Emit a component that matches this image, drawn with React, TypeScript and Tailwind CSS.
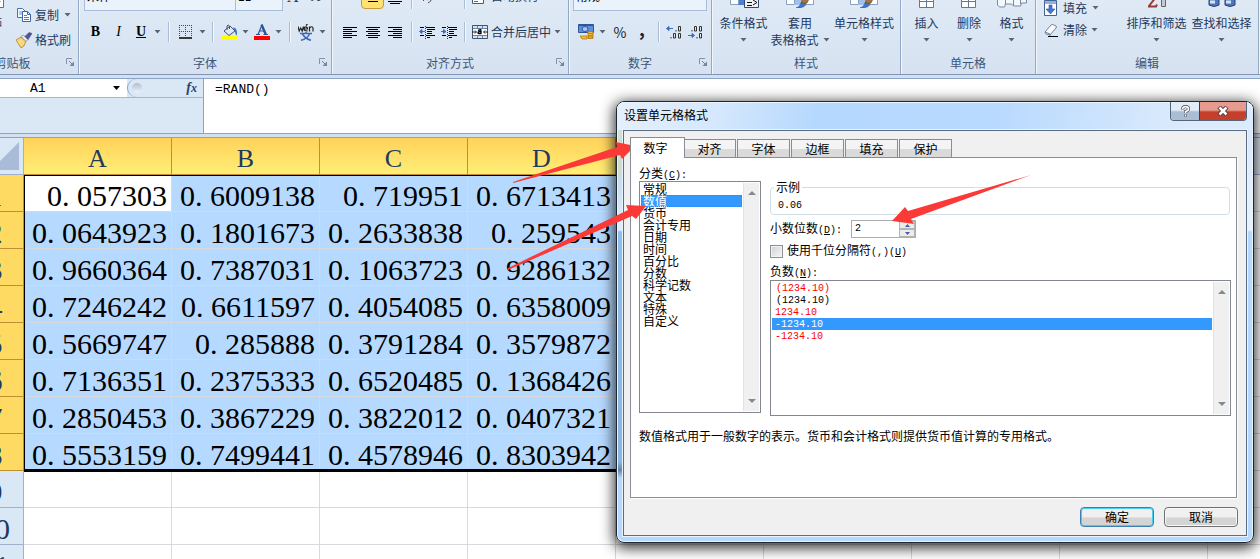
import { useState, type ReactNode } from "react";
import clsx from "clsx";

const columns = ["A", "B", "C", "D", "E", "F", "G", "H", "I"];

const values = [
  ["0.057303", "0.6009138", "0.719951", "0.6713413"],
  ["0.0643923", "0.1801673", "0.2633838", "0.259543"],
  ["0.9660364", "0.7387031", "0.1063723", "0.9286132"],
  ["0.7246242", "0.6611597", "0.4054085", "0.6358009"],
  ["0.5669747", "0.285888", "0.3791284", "0.3579872"],
  ["0.7136351", "0.2375333", "0.6520485", "0.1368426"],
  ["0.2850453", "0.3867229", "0.3822012", "0.0407321"],
  ["0.5553159", "0.7499441", "0.4578946", "0.8303942"],
  [],
  [],
  [],
];

const tabs = ["数字", "对齐", "字体", "边框", "填充", "保护"];

const categories = [
  "常规", "数值", "货币", "会计专用", "日期", "时间",
  "百分比", "分数", "科学记数", "文本", "特殊", "自定义",
];

const negatives = [
  { text: "(1234.10)", red: true, indent: true },
  { text: "(1234.10)", red: false, indent: true },
  { text: "1234.10", red: true, indent: false },
  { text: "-1234.10", red: false, indent: false },
  { text: "-1234.10", red: true, indent: false },
];

/* ---------- icons ---------- */

function Caret({ dark = false }: { dark?: boolean }) {
  return (
    <svg width="7" height="4" viewBox="0 0 7 4" className="shrink-0" aria-hidden="true">
      <path d={dark ? "M0 0h7L3.500 4z" : "M.5 0h6L3.500 3.500z"} fill={dark ? "#000" : "#5c6673"} />
    </svg>
  );
}

function Launcher() {
  return (
    <svg width="8" height="8" viewBox="0 0 8 8" aria-hidden="true">
      <path d="M.5 6V.5H6" fill="none" stroke="#8494a8" />
      <path d="M3 3l3 3" stroke="#75859b" />
      <path d="M8 3.500V8H3.500z" fill="#75859b" />
    </svg>
  );
}

function CopyIcon() {
  return (
    <svg width="16" height="16" viewBox="0 0 16 16" aria-hidden="true">
      <path d="M1.500 1.500h5l3 3v6h-8z" fill="#f5f9ff" stroke="#4a72b0" />
      <path d="M3 5h4M3 7h4" stroke="#6d94d0" />
      <path d="M6.500 4.500h5l3 3v7h-8z" fill="#fff" stroke="#3b66a8" />
      <path d="M11.500 4.500v3h3" fill="none" stroke="#3b66a8" />
      <path d="M8 8.500h3M8 10.500h5M8 12.500h5" stroke="#4f81c8" />
    </svg>
  );
}

function BrushIcon() {
  return (
    <svg width="16" height="16" viewBox="0 0 16 16" aria-hidden="true">
      <path d="M0 8l5-3 5 4-2 5-3 2z" fill="#f3cf62" stroke="#a67c34" strokeWidth=".7" />
      <path d="M2 8.500l4 5M4 7.500l4 4.500" stroke="#fff2b8" />
      <path d="M5 4.500L7.500 3l4.500 4.500-2 2z" fill="#e8ebf2" stroke="#7b7f8c" strokeWidth=".7" />
      <path d="M9 4.500L13 .5l3 1-4 6z" fill="#54549f" stroke="#33336e" strokeWidth=".5" />
    </svg>
  );
}

function PasteIcon() {
  return (
    <svg width="32" height="32" viewBox="0 0 32 32" aria-hidden="true">
      <path d="M3 3h22v26H3z" fill="#e2b55c" stroke="#97692b" />
      <path d="M12.500 10.500h17v20h-17z" fill="#fff" stroke="#5b6f8f" />
      <path d="M15 24.500h12M15 21.500h12M15 18.500h12" stroke="#9db4d6" />
    </svg>
  );
}

function BordersIcon() {
  return (
    <svg width="14" height="14" viewBox="0 0 14 14" aria-hidden="true">
      <path d="M0 .5h13M0 6.500h13" stroke="#444" strokeDasharray="1 1" />
      <path d="M.5 0v12M6.500 0v12M12.500 0v12" stroke="#444" strokeDasharray="1 1" />
      <path d="M0 13h13" stroke="#000" strokeWidth="1.500" />
    </svg>
  );
}

function BucketIcon() {
  return (
    <svg width="16" height="16" viewBox="0 0 16 16" aria-hidden="true">
      <path d="M2 7l6-5 5 5-6 4.500z" fill="#dde8f7" stroke="#44536b" />
      <path d="M5 6V2q1-2 2.500 0V5" fill="none" stroke="#44536b" />
      <path d="M11 3.500q4.500-.5 4 8-2-1-2-4z" fill="#3f72c4" />
      <path d="M0 12h16v4H0z" fill="#ff0" />
    </svg>
  );
}

function FontColorIcon() {
  return (
    <svg width="16" height="16" viewBox="0 0 16 16" aria-hidden="true">
      <path d="M2 10.500h4M9.500 10.500h4.500M4 10.500L8 1M5.500 7h5" fill="none" stroke="#2d5593" strokeWidth="1.200" />
      <path d="M7.500 .5l4.300 10" fill="none" stroke="#2d5593" strokeWidth="2.400" />
      <path d="M0 12h16v4H0z" fill="red" />
    </svg>
  );
}

function PhoneticIcon() {
  return (
    <svg width="16" height="17" viewBox="0 0 16 17" aria-hidden="true">
      <path d="M0 2.500L1.200 7l1.500-3 1.500 3L5.500 2.500M6 5h3.500q0-2.200-1.700-2.200T6 5q0 2 3.500 1.800M8 1.500L9.500 0M11.500 7.500v-5M11.500 4q3-2.500 3.500 0v3.500" fill="none" stroke="#222" strokeWidth="1.200" />
      <path d="M2 9.500h12M8 8v2M4.500 10q3 5 8.500 6.300M11.500 10Q9 15 3 16.300" fill="none" stroke="#3f68b5" strokeWidth="1.500" />
    </svg>
  );
}

function LinesIcon({ align }: { align: "left" | "center" | "right" }) {
  const paths = {
    left: "M0 .5h14M0 2.500h9M0 4.500h14M0 6.500h9M0 8.500h14M0 10.500h9",
    center: "M0 .5h14M2 2.500h10M0 4.500h14M2 6.500h10M0 8.500h14M2 10.500h10",
    right: "M0 .5h14M5 2.500h9M0 4.500h14M5 6.500h9M0 8.500h14M5 10.500h9",
  };
  return (
    <svg width="14" height="11" viewBox="0 0 14 11" aria-hidden="true">
      <path d={paths[align]} stroke="#000" />
    </svg>
  );
}

function IndentIcon({ increase = false }: { increase?: boolean }) {
  return (
    <svg width="16" height="13" viewBox="0 0 16 13" aria-hidden="true">
      <path d="M1 1.500h4M7 1.500h9M8 3.500h8M8 5.500h5M8 7.500h5M1 9.500h4M7 9.500h9M8 11.500h3" stroke="#000" />
      <path d="M6.500 0v13" stroke="#333" strokeDasharray="1 1" />
      <path d={increase ? "M0 5.500h3M2.500 3.500L5 5.500 2.500 7.500z" : "M2 5.500h4M3 3.500L.5 5.500 3 7.500z"} fill="#3b6cc5" stroke="#3b6cc5" />
    </svg>
  );
}

function MergeIcon() {
  return (
    <svg width="16" height="14" viewBox="0 0 16 14" aria-hidden="true">
      <path d="M.5 .5h15v13H.5z" fill="#d3e2f4" stroke="#44546e" />
      <path d="M5.500 1v3M10.500 1v3M5.500 10v3M10.500 10v3" stroke="#6683a8" />
      <path d="M1 4h14v6H1z" fill="#fff" />
      <path d="M1 3.500h14M1 10.500h14" stroke="#6683a8" />
      <path d="M0 7h4M12 7h4M3 5.500L4.500 7 3 8.500M13 5.500L11.500 7 13 8.500" fill="none" stroke="#222" />
      <path d="M6 5.500q3-1.500 3 0V9M9 6.500q-3 0-3 1.300T9 8.500" fill="none" stroke="#000" strokeWidth="1.300" />
    </svg>
  );
}

function WrapIcon() {
  return (
    <svg width="12" height="16" viewBox="0 0 12 16" aria-hidden="true">
      <path d="M.5 .5h11v15H.5z" fill="#fff" stroke="#44607f" />
      <path d="M2 11.500h7M2 13.500h4" stroke="#3b6cc5" />
    </svg>
  );
}

function CurrencyIcon() {
  return (
    <svg width="17" height="16" viewBox="0 0 17 16" aria-hidden="true">
      <path d="M.5 .5h15v8H.5z" fill="#5f8fdb" stroke="#2f569b" />
      <path d="M1 1h14v1H1z" fill="#2f569b" />
      <ellipse cx="7" cy="5" rx="3" ry="2.500" fill="#a8c5f0" stroke="#2f569b" />
      <path d="M10 7.500h5v7h-5zM2 12h7v3H4z" fill="#f2bd3b" stroke="#a86f0c" strokeWidth=".7" />
      <path d="M10 9.500h5M10 11.500h5M10 13h5" stroke="#a86f0c" strokeWidth=".7" />
    </svg>
  );
}

function DecimalIcon({ more = false }: { more?: boolean }) {
  return (
    <svg width="16" height="13" viewBox="0 0 16 13" aria-hidden="true">
      {more ? (
        <g fill="none" stroke="#333">
          <path d="M4 4v1.500M6.500 .5h2v4.500h-2zM11.500 .5h2v4.500h-2zM11.500 7.500h2v4.500h-2zM9 11v1.500" />
          <path d="M0 9.500h5M4 7.500l2.500 2L4 11.500z" fill="#3b6cc5" stroke="#3b6cc5" />
        </g>
      ) : (
        <g fill="none" stroke="#333">
          <path d="M12.500 .5h2v4.500h-2zM10 4v1.500M7.500 7.500h2v4.500h-2zM12.500 7.500h2v4.500h-2zM5 11v1.500" />
          <path d="M2 2.500h5M3 .5L.5 2.500 3 4.500z" fill="#3b6cc5" stroke="#3b6cc5" />
        </g>
      )}
    </svg>
  );
}

function StyleIcon({ brush = true }: { brush?: boolean }) {
  return (
    <svg width="30" height="28" viewBox="0 0 30 28" aria-hidden="true">
      <path d="M1.500 1.500h27v23h-27z" fill="#fff" stroke="#8aa0bd" />
      <path d="M9 2h7v23H9z" fill={brush ? "#9dc0ee" : "#4a7fd8"} />
      <path d="M2 18.500h26M9.500 2v22M16.500 2v22" stroke="#8aa0bd" />
      {brush ? (
        <>
          <path d="M11 28q4-1 5-5l5-1q1 6-10 6z" fill="#4373ca" stroke="#2c4f94" strokeWidth=".6" />
          <path d="M16 23L21 12l5-6 3 3-7 14z" fill="#a0763c" stroke="#67471d" strokeWidth=".6" />
        </>
      ) : (
        <>
          <path d="M15.500 14.500h14v13h-14z" fill="#eef3fa" stroke="#34496b" />
          <path d="M18 22.500h5M18 25.500h5M24 20l4 2.500-4 2.500" fill="none" stroke="#111" />
        </>
      )}
    </svg>
  );
}

function CellsIcon({ wide = false }: { wide?: boolean }) {
  return wide ? (
    <svg width="30" height="28" viewBox="0 0 30 28" aria-hidden="true">
      <path d="M.5 12v13l2 2h5l1-3h6l2 2h7l1-3h5V12M8.500 12v12M16.500 12v14M23.500 12v12" fill="#f4f8fd" stroke="#7889a2" />
    </svg>
  ) : (
    <svg width="16" height="26" viewBox="0 0 16 26" aria-hidden="true">
      <path d="M.5 .5h14v25H.5z" fill="#fff" stroke="#66778f" />
      <path d="M1 19.500h14M7.500 1v24" stroke="#66778f" />
    </svg>
  );
}

function FillDownIcon() {
  return (
    <svg width="14" height="16" viewBox="0 0 14 16" aria-hidden="true">
      <path d="M.5 .5h12v15H.5z" fill="#fff" stroke="#45638f" />
      <path d="M1 1h11v3H1z" fill="#8fb0e2" />
      <path d="M5 5h3v4h3l-4.500 5L2 9h3z" fill="#3f76dc" stroke="#2953a8" strokeWidth=".6" />
    </svg>
  );
}

function EraserIcon() {
  return (
    <svg width="15" height="13" viewBox="0 0 15 13" aria-hidden="true">
      <path d="M1 8l6-7q1-1 3 0l2 1q1 1 0 2l-6 7-4-1z" fill="#f8fafd" stroke="#73839b" />
      <path d="M1 8l5 2v2" fill="none" stroke="#73839b" />
      <path d="M4 12.500h10" stroke="#000" />
    </svg>
  );
}

function SortIcon() {
  return (
    <svg width="20" height="26" viewBox="0 0 20 26" aria-hidden="true">
      <path d="M9 15L2 24M1 24.500h8l1-2" fill="none" stroke="#9a3a34" strokeWidth="2" />
      <path d="M14.500 10.500h4v14h-4z" fill="#c5c9d0" stroke="#6d6560" />
    </svg>
  );
}

function FindIcon() {
  return (
    <svg width="28" height="24" viewBox="0 0 28 24" aria-hidden="true">
      <path d="M1 12h10v9q-5 3-10 0zM17 12h10v9q-5 3-10 0z" fill="#4f77ba" stroke="#28406f" />
      <path d="M2 18h5M18 18h5" stroke="#d6e4fa" strokeWidth="3" />
    </svg>
  );
}

/* ---------- ribbon ---------- */

function Group({ title, launcher = false, className, children }: {
  title: string;
  launcher?: boolean;
  className: string;
  children: ReactNode;
}) {
  return (
    <section
      aria-label={title}
      className={clsx("flex h-[97px] shrink-0 flex-col border-r border-[#94a8c6] shadow-[1px_0_0_#f2f7fd]", className)}
    >
      <div className="flex h-[75px] flex-col">{children}</div>
      <div className="relative flex h-[22px] items-center justify-center text-[#3e5578]">
        {title}
        {launcher && (
          <button aria-label={title + "设置"} className="absolute top-1.5 right-1">
            <Launcher />
          </button>
        )}
      </div>
    </section>
  );
}

function Tool({ label, className, children }: { label: string; className: string; children: ReactNode }) {
  return (
    <button aria-label={label} className={clsx("flex h-[22px] shrink-0 items-center justify-center", className)}>
      {children}
    </button>
  );
}

function Sep({ className }: { className: string }) {
  return (
    <span className={clsx("flex shrink-0 justify-center", className)}>
      <span className="h-5 w-px bg-[#aabdd6] shadow-[1px_0_0_#f5f9ff]" />
    </span>
  );
}

function BigButton({ icon, lines, className }: { icon: ReactNode; lines: string[]; className: string }) {
  return (
    <button className={clsx("flex h-[75px] shrink-0 flex-col items-center whitespace-nowrap", className)}>
      <span className="flex h-[31px] items-end">{icon}</span>
      <span className="mt-1.5 h-[17px] leading-[17px]">{lines[0]}</span>
      <span className="flex h-[17px] items-center gap-1 leading-[17px]">
        {lines[1]}
        <Caret />
      </span>
    </button>
  );
}

function Ribbon() {
  return (
    <header className="flex h-[75px] items-end overflow-hidden border-b border-[#8296b4] bg-linear-to-b from-[#dfeaf6] to-[#d6e2f1] text-[#1e395b]">
      <Group title="剪贴板" launcher className="-ml-[53px] w-[132px]">
        <div className="flex">
          <button className="flex h-[75px] w-[59px] flex-col items-end">
            <PasteIcon />
            <span className="mt-1 mr-1">粘贴</span>
          </button>
          <div className="mt-[25px] ml-2.5">
            <button className="flex h-[25px] items-center gap-[3px] whitespace-nowrap">
              <CopyIcon />复制<span className="ml-0.5"><Caret /></span>
            </button>
            <button className="flex h-[25px] items-center gap-[3px] whitespace-nowrap">
              <BrushIcon />格式刷
            </button>
          </div>
        </div>
      </Group>

      <Group title="字体" launcher className="w-[253px]">
        <div className="flex items-start pl-[5px]">
          <select aria-label="字体名称" className="h-[34px] w-[152px] appearance-none border border-[#a9bddb] bg-[#eaf2fb] pt-1 pl-0.5 text-black">
            <option>宋体</option>
          </select>
          <select aria-label="字号" className="-ml-px h-[34px] w-[48px] appearance-none border border-[#a9bddb] bg-[#eaf2fb] pt-1 pl-0.5 text-black">
            <option>11</option>
          </select>
          <button className="mt-3 ml-1 font-['Liberation_Serif',serif] text-base leading-4">A</button>
          <button className="mt-3 ml-3 font-['Liberation_Serif',serif] text-sm leading-4">A</button>
        </div>
        <div className="mt-2.5 flex items-center pl-[5px]">
          <Tool label="加粗" className="w-[23px] font-['Liberation_Serif',serif] text-sm font-bold text-black"><b>B</b></Tool>
          <Tool label="倾斜" className="w-[23px] font-['Liberation_Serif',serif] text-sm text-black"><i>I</i></Tool>
          <Tool label="下划线" className="w-[22px] font-['Liberation_Serif',serif] text-sm font-bold text-black"><u>U</u></Tool>
          <Tool label="下划线选项" className="w-2.5"><Caret /></Tool>
          <Sep className="w-3" />
          <Tool label="边框" className="w-6"><BordersIcon /></Tool>
          <Tool label="边框选项" className="w-2"><Caret /></Tool>
          <Sep className="w-[13px]" />
          <Tool label="填充颜色" className="w-[21px]"><BucketIcon /></Tool>
          <Tool label="填充颜色选项" className="w-2.5"><Caret /></Tool>
          <Tool label="字体颜色" className="w-[23px]"><FontColorIcon /></Tool>
          <Tool label="字体颜色选项" className="w-2.5"><Caret /></Tool>
          <Sep className="w-3" />
          <Tool label="拼音" className="w-[21px]"><PhoneticIcon /></Tool>
          <Tool label="拼音选项" className="w-3"><Caret /></Tool>
        </div>
      </Group>

      <Group title="对齐方式" launcher className="w-[237px]">
        <div className="flex h-8 items-end pl-1.5">
          <Tool label="顶端对齐" className="w-[23px] pb-3"><LinesIcon align="left" /></Tool>
          <button aria-label="垂直居中" className="flex h-[22px] w-[23px] items-center justify-center rounded-sm border border-[#c79a35] bg-[#ffe273] pb-[3px]">
            <LinesIcon align="center" />
          </button>
          <Tool label="底端对齐" className="w-[22px]"><LinesIcon align="center" /></Tool>
          <Sep className="w-2.5" />
          <Tool label="方向" className="w-[22px]">
            <svg width="12" height="12" viewBox="0 0 12 12" aria-hidden="true">
              <path d="M2 9l8-8M3 5l3 3M6 8q3-3 4-1t-3 4" fill="none" stroke="#555" />
            </svg>
          </Tool>
          <span className="w-[22px]" />
          <Sep className="w-[9px]" />
          <button className="ml-[3px] flex h-[27px] items-center gap-[7px] leading-4 whitespace-nowrap"><WrapIcon />自动换行</button>
        </div>
        <div className="mt-3 flex items-center pl-1.5">
          <Tool label="左对齐" className="w-[23px]"><LinesIcon align="left" /></Tool>
          <Tool label="居中" className="w-[23px]"><LinesIcon align="center" /></Tool>
          <Tool label="右对齐" className="w-[22px]"><LinesIcon align="right" /></Tool>
          <Sep className="w-2.5" />
          <Tool label="减少缩进量" className="w-[22px]"><IndentIcon /></Tool>
          <Tool label="增加缩进量" className="w-[22px]"><IndentIcon increase /></Tool>
          <Sep className="w-[9px]" />
          <button className="ml-[3px] flex items-center gap-[3px] whitespace-nowrap">
            <MergeIcon />合并后居中<Caret />
          </button>
        </div>
      </Group>

      <Group title="数字" launcher className="w-[143px]">
        <select aria-label="数字格式" className="mx-1 h-[34px] appearance-none border border-[#a9bddb] bg-[#eaf2fb] pt-1 pl-0.5 text-black">
          <option>常规</option>
        </select>
        <div className="mt-2.5 flex items-center pl-2">
          <Tool label="会计数字格式" className="w-[18px]"><CurrencyIcon /></Tool>
          <Tool label="会计数字格式选项" className="w-3.5"><Caret /></Tool>
          <Tool label="百分比样式" className="w-[22px] text-sm text-[#222]">%</Tool>
          <Tool label="千位分隔样式" className="w-[22px] pb-2 text-lg font-bold text-[#222]">,</Tool>
          <Sep className="w-2.5" />
          <Tool label="增加小数位数" className="w-[22px]"><DecimalIcon /></Tool>
          <Tool label="减少小数位数" className="w-[22px]"><DecimalIcon more /></Tool>
        </div>
      </Group>

      <Group title="样式" className="w-[189px]">
        <div className="flex pl-1">
          <BigButton icon={<StyleIcon brush={false} />} lines={["条件格式"]} className="w-[55px]" />
          <BigButton icon={<StyleIcon />} lines={["套用", "表格格式"]} className="w-[58px]" />
          <BigButton icon={<StyleIcon />} lines={["单元格样式"]} className="w-[70px]" />
        </div>
      </Group>

      <Group title="单元格" className="w-[135px]">
        <div className="flex pl-1">
          <BigButton icon={<CellsIcon />} lines={["插入"]} className="w-[43px]" />
          <BigButton icon={<CellsIcon />} lines={["删除"]} className="w-[42px]" />
          <BigButton icon={<CellsIcon wide />} lines={["格式"]} className="w-[43px]" />
        </div>
      </Group>

      <Group title="编辑" className="w-[223px]">
        <div className="flex pl-2">
          <div className="mt-5 flex w-20 flex-col">
            <button className="flex h-[22px] items-center gap-[5px] whitespace-nowrap"><FillDownIcon />填充<Caret /></button>
            <button className="flex h-[22px] items-center gap-1 whitespace-nowrap"><EraserIcon />清除<Caret /></button>
          </div>
          <BigButton icon={<SortIcon />} lines={["排序和筛选"]} className="w-[65px]" />
          <BigButton icon={<FindIcon />} lines={["查找和选择"]} className="w-[65px]" />
        </div>
      </Group>
    </header>
  );
}

function FormulaBar() {
  return (
    <div className="mt-[3px] flex h-14 border-y border-[#8ba3c4] bg-[#dae8f6]">
      <div className="flex h-[19px] w-[203px] border-b border-[#a3b7d2]">
        <input
          aria-label="名称框"
          defaultValue="A1"
          className="w-[113px] bg-white pt-0.5 pl-[30px] font-['Liberation_Mono',monospace] text-[13px] text-black"
        />
        <button aria-label="名称列表" className="flex w-3.5 items-center bg-white"><Caret dark /></button>
        <div className="flex flex-1 items-center justify-between rounded-l-full border-l border-[#8ba3c4] pr-1.5 pl-1">
          <span className="size-2.5 rounded-full bg-linear-to-b from-[#b0bed0] to-[#eef4fb]" />
          <button aria-label="插入函数" className="font-['Liberation_Serif',serif] text-sm leading-4 font-bold text-[#2c4367] italic">
            f<span className="text-xs">x</span>
          </button>
        </div>
      </div>
      <textarea
        aria-label="编辑栏"
        defaultValue="=RAND()"
        className="flex-1 resize-none border-l border-[#8ba3c4] bg-white px-[11px] py-[3px] font-['Liberation_Mono',monospace] text-[13px] leading-4 text-black"
      />
    </div>
  );
}

/* ---------- sheet ---------- */

// the decimal point takes a full digit's width
function Digits({ value }: { value: string }) {
  const [whole, fraction] = value.split(".");
  return (
    <>
      {whole}
      <span className="inline-block w-[15px] text-left">.</span>
      {fraction}
    </>
  );
}

function Sheet() {
  return (
    <div className="relative mt-[3px] overflow-hidden border-t border-[#8ba3c4]">
      <table className="-ml-[33px] w-[1389px] table-fixed border-separate border-spacing-0 font-['Liberation_Serif',serif] text-[30px] leading-[30px]">
        <thead>
          <tr className="h-[37px]">
            <th className="w-[57px] border-r border-b border-[#9eb0cc] bg-[#dae8f6] p-0">
              <svg width="19" height="28" viewBox="0 0 19 28" className="mr-1 ml-auto" aria-hidden="true">
                <path d="M19 0v28H0V19z" fill="#a9bbd8" />
              </svg>
            </th>
            {columns.map((name, i) => (
              <th
                key={name}
                className={clsx(
                  "border-r border-b p-0 pt-1.5 text-[26px] leading-[30px] font-normal text-[#1e3a5f]",
                  i < 4
                    ? "border-[#c08f34] bg-linear-to-b from-[#ffd25a] to-[#ffee76]"
                    : "border-[#9eb0cc] bg-[#dfe8f3]",
                )}
              >
                {name}
              </th>
            ))}
          </tr>
        </thead>
        <tbody>
          {values.map((row, r) => (
            <tr key={r} className="h-[37px]">
              <th
                className={clsx(
                  "border-r border-b p-0 pt-1.5 font-normal text-[#1e3a5f]",
                  r < 8 ? "border-[#c08f34] bg-[#ffda62]" : "border-[#9eb0cc] bg-[#dae8f6]",
                )}
              >
                {r + 1}
              </th>
              {columns.map((name, c) => (
                <td
                  key={name}
                  className={clsx(
                    "border-r border-b border-[#d6d9de] p-0 pt-1.5 pr-1 text-right whitespace-nowrap text-black",
                    row[c] && (r > 0 || c > 0) ? "bg-[#b6d9ff]" : "bg-white",
                  )}
                >
                  {row[c] && <Digits value={row[c]} />}
                </td>
              ))}
            </tr>
          ))}
        </tbody>
      </table>
      {/* selection outline */}
      <div className="absolute top-[37px] left-6 h-[297px] w-[592px] border-t border-b-3 border-l border-black" />
    </div>
  );
}

/* ---------- dialog ---------- */

function Latin({ children }: { children: ReactNode }) {
  return <span className="font-['Liberation_Mono',monospace] text-[10px]">{children}</span>;
}

function ScrollBar() {
  return (
    <div className="m-px flex w-4 shrink-0 flex-col items-center justify-between border-l border-[#e3e3e3] bg-[#f0f0f0] py-2">
      <svg width="8" height="4" viewBox="0 0 8 4" aria-hidden="true"><path d="M4 0l4 4H0z" fill="#86898e" /></svg>
      <svg width="8" height="4" viewBox="0 0 8 4" aria-hidden="true"><path d="M0 0h8L4 4z" fill="#86898e" /></svg>
    </div>
  );
}

function FormatDialog() {
  const [tab, setTab] = useState("数字");
  const [category, setCategory] = useState("数值");
  const [negative, setNegative] = useState(3);

  return (
    <div
      role="dialog"
      aria-label="设置单元格格式"
      className="absolute top-[101px] right-1.5 left-[616px] rounded-lg border border-[#20262e] bg-[linear-gradient(to_bottom,#d9e9fa_0,#cfdccb_40px,#cfdccb_70px,#c5dcf5_78px,#e0eefc_128px,#8fbdec_130px,#8ab6e4_360px,#6585a8_368px,#b6d8fc_376px),linear-gradient(to_bottom,#d9e9fa_0,#d9e9fa_30px,#e8f2fc_128px,#b6d8fc_130px)] bg-[length:8px_100%,100%_100%] bg-no-repeat px-1.5 pb-1.5 text-xs text-black shadow-[0_3px_14px_2px_rgba(0,0,0,0.8),inset_0_0_0_1px_#e9f4ff]"
    >
      <div className="-mx-1.5 flex h-7 items-start justify-between rounded-t-lg bg-[linear-gradient(100deg,#e4f0fc_0,#d5e8fd_100px,#b5d8fe_200px,#b9dafe_60%,#dcebfc_90%)] pr-1.5 pl-[7px] shadow-[inset_0_1px_0_#e9f4ff]">
        <h2 className="mt-1 leading-[18px]">设置单元格格式</h2>
        <div className="flex h-[19px] overflow-hidden rounded-b border border-t-0 border-[#57657a]">
          <button aria-label="帮助" className="flex w-7 items-center justify-center bg-linear-to-b from-[#e3edf8] from-45% to-[#a9bdd4] to-55%">
            <svg width="9" height="13" viewBox="0 0 9 13" aria-hidden="true">
              <path d="M1.500 4.500q0-3 3-3t3 2.700q0 1.300-3 2.300v1.500M4.500 9.500v2" fill="none" stroke="#3e4654" strokeWidth="3" />
              <path d="M1.500 4.200q0-2.500 3-2.500t3 2.500q0 1.300-3 2.300V8M4.500 9.800v1.400" fill="none" stroke="#fff" strokeWidth="1.700" />
            </svg>
          </button>
          <button aria-label="关闭" className="flex w-[47px] items-center justify-center border-l border-[#6b2b2b] bg-linear-to-b from-[#e79b8f] from-45% to-[#c4402c] to-55%">
            <svg width="12" height="10" viewBox="0 0 12 10" aria-hidden="true">
              <path d="M2 1l8 8M10 1L2 9" stroke="#5a3a40" strokeWidth="4.500" />
              <path d="M2.500 1.500l7 7M9.500 1.500l-7 7" stroke="#fff" strokeWidth="2.500" />
            </svg>
          </button>
        </div>
      </div>

      <div className="border border-[#5a6c84] bg-[#f0f0f0] px-1.5 pt-1.5 shadow-[0_0_0_1px_#e9f4ff]">
        <div role="tablist" className="flex h-5 items-end">
          {tabs.map((name) => (
            <button
              key={name}
              role="tab"
              aria-selected={name === tab}
              onClick={() => setTab(name)}
              className={clsx(
                "border border-b-0 border-[#898c95]",
                name === tab
                  ? "relative z-10 -mr-0.5 -mb-px h-[21px] w-[55px] bg-white pr-1"
                  : "mr-px h-[18px] w-[53px] bg-linear-to-b from-[#f4f4f4] from-50% to-[#dadada] to-55%",
              )}
            >
              {name}
            </button>
          ))}
        </div>

        <div role="tabpanel" className="mr-[3px] h-[341px] border border-[#898c95] bg-white px-2 pt-1.5 shadow-[1px_1px_0_#fff]">
          <div className="flex">
            <div className="mr-[9px] w-[122px] shrink-0">
              <div id="category-label" className="h-[17px] leading-[17px]">分类<Latin>(<u>C</u>):</Latin></div>
              <div className="flex h-[232px] border border-[#828790]">
                <ul role="listbox" aria-labelledby="category-label" className="flex-1 pt-px pl-px">
                  {categories.map((name) => (
                    <li
                      key={name}
                      role="option"
                      aria-selected={name === category}
                      onClick={() => setCategory(name)}
                      className={clsx(
                        "h-3 pl-0.5 leading-3 whitespace-nowrap",
                        name === category && "bg-[#3399ff] text-white outline outline-dotted -outline-offset-1 outline-[#cc6600]",
                      )}
                    >
                      {name}
                    </li>
                  ))}
                </ul>
                <ScrollBar />
              </div>
            </div>

            <div className="min-w-0 flex-1 pt-[15px]">
              <fieldset className="-mr-0.5 h-9 rounded border border-[#d0dfe6] px-[7px]">
                <legend className="-ml-1 px-0.5 leading-4">示例</legend>
                <div className="leading-4"><Latin>0.06</Latin></div>
              </fieldset>

              <div className="mt-1 flex h-5 items-center">
                <label htmlFor="places" className="w-[81px]">小数位数<Latin>(<u>D</u>):</Latin></label>
                <div className="flex h-[18px] w-[65px] border border-[#abadb3]">
                  <input id="places" defaultValue="2" className="min-w-0 flex-1 pl-[3px] font-['Liberation_Mono',monospace] text-[10px]" />
                  <div className="flex w-4 flex-col">
                    <button aria-label="增加" className="flex flex-1 items-center justify-center border border-[#b5b5b5] bg-[#ececec]">
                      <svg width="5" height="3" viewBox="0 0 5 3" aria-hidden="true"><path d="M2.500 0L5 3H0z" fill="#3f5fa8" /></svg>
                    </button>
                    <button aria-label="减少" className="flex flex-1 items-center justify-center border border-[#b5b5b5] bg-[#ececec]">
                      <svg width="5" height="3" viewBox="0 0 5 3" aria-hidden="true"><path d="M0 0h5L2.500 3z" fill="#3f5fa8" /></svg>
                    </button>
                  </div>
                </div>
              </div>

              <label className="flex h-5 items-center gap-1 pt-1">
                <input
                  type="checkbox"
                  className="size-[13px] appearance-none border border-[#8e8f8f] bg-linear-to-br from-[#cfd3d9] to-[#f6f6f6] shadow-[inset_0_0_0_1px_#f4f4f4]"
                />
                <span>使用千位分隔符<Latin>(,)(<u>U</u>)</Latin></span>
              </label>

              <div id="negative-label" className="mt-[3px] mb-px h-[17px] leading-[17px]">负数<Latin>(<u>N</u>):</Latin></div>
              <div className="-mr-[3px] flex h-[136px] border border-[#828790]">
                <ul role="listbox" aria-labelledby="negative-label" className="flex-1 pt-px pl-px">
                  {negatives.map((item, i) => (
                    <li
                      key={i}
                      role="option"
                      aria-selected={i === negative}
                      onClick={() => setNegative(i)}
                      className={clsx(
                        "h-3 font-['Liberation_Mono',monospace] text-[10px] leading-[14px]",
                        item.indent ? "pl-1" : "pl-[3px]",
                        i === negative ? "bg-[#3399ff] text-white" : item.red ? "text-[#ff0000]" : "text-black",
                      )}
                    >
                      {item.text}
                    </li>
                  ))}
                </ul>
                <ScrollBar />
              </div>
            </div>
          </div>
          <p className="mt-[11px] leading-[18px]">数值格式用于一般数字的表示。货币和会计格式则提供货币值计算的专用格式。</p>
        </div>

        <div className="flex justify-end gap-2.5 py-2 pt-[9px] pr-0.5">
          <button className="h-5 w-[74px] rounded-sm border border-[#3c7fb1] bg-linear-to-b from-[#f0f0f0] from-50% to-[#d4d4d4] to-55% leading-[18px] shadow-[inset_0_0_0_1px_#46d0f4]">
            确定
          </button>
          <button className="h-5 w-[74px] rounded-sm border border-[#707070] bg-linear-to-b from-[#f0f0f0] from-50% to-[#d4d4d4] to-55% leading-[18px] shadow-[inset_0_0_0_1px_#f8f8f8]">
            取消
          </button>
        </div>
      </div>
    </div>
  );
}

function Arrows() {
  return (
    <svg width="1260" height="559" viewBox="0 0 1260 559" className="pointer-events-none absolute top-0 left-0" aria-hidden="true">
      <g fill="#fb3a37">
        <path d="M513 182L617 147 616 142 635 146 622 159 620 155 513 183z" />
        <path d="M508 268L628 210 626 205 646 206 636 219 632 216 508 270z" />
        <path d="M1031 175L908 211 905 207 892 221 914 224 911 219z" />
      </g>
    </svg>
  );
}

export default function App() {
  return (
    <div className="relative h-screen overflow-hidden bg-[#d3e0f0] font-['Noto_Sans_CJK_SC',sans-serif] text-xs">
      <Ribbon />
      <FormulaBar />
      <Sheet />
      <FormatDialog />
      <Arrows />
    </div>
  );
}
